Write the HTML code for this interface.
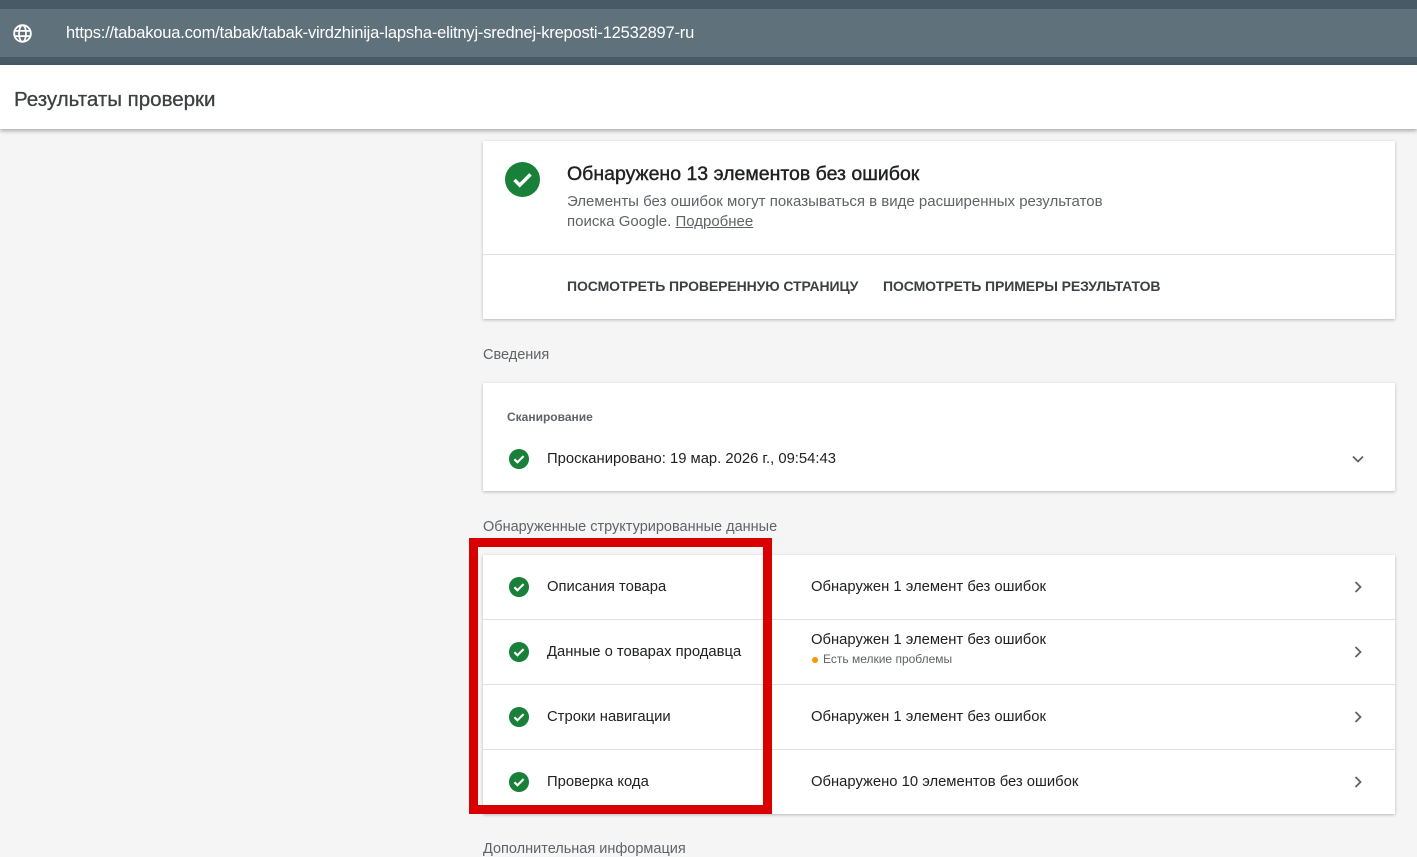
<!DOCTYPE html>
<html><head><meta charset="utf-8"><style>
*{margin:0;padding:0;box-sizing:border-box}
body{width:1417px;height:856px;overflow:hidden;background:#f5f5f5;font-family:"Liberation Sans",Roboto,sans-serif;position:relative;color:#202124}
.top{position:absolute;left:0;top:0;width:1417px;height:65px;background:#5f717b;border-top:9px solid #475a65;border-bottom:8px solid #475a65}
.url{position:absolute;left:66px;color:#fff;font-size:16.5px;letter-spacing:-0.2px}
.hdr{position:absolute;left:0;top:65px;width:1417px;height:64px;background:#fff;box-shadow:0 2px 4px rgba(0,0,0,.3)}
.hdr span{position:absolute;left:14px;top:23px;font-size:20.5px;color:#3c4043;font-weight:500;-webkit-text-stroke:0.3px #3c4043}
.card{position:absolute;left:483px;width:912px;background:#fff;box-shadow:0 1px 3px rgba(0,0,0,.25)}
.lbl{position:absolute;left:483px;font-size:14.5px;color:#5f6368}
.chk{position:absolute;width:20px;height:20px}
.t{position:absolute;font-size:14.8px;white-space:nowrap}
.row{position:absolute;left:0;width:912px;height:65px;border-top:1px solid #e0e0e0}
.chev{position:absolute;right:30px;width:14px;height:14px}
</style></head><body>
<div class="top">
<svg style="position:absolute;left:12px;top:14px" width="21" height="21" viewBox="0 0 24 24"><circle cx="12" cy="12" r="9.5" fill="none" stroke="#fff" stroke-width="2.2"/><ellipse cx="12" cy="12" rx="4" ry="9.5" fill="none" stroke="#fff" stroke-width="2"/><path d="M3 9h18M3 15h18" stroke="#fff" stroke-width="2"/></svg>
<div class="url" style="top:15px">https://tabakoua.com/tabak/tabak-virdzhinija-lapsha-elitnyj-srednej-kreposti-12532897-ru</div>
</div>
<div class="hdr"><span>Результаты проверки</span></div>

<div class="card" style="top:141px;height:178px">
<svg class="chk" style="left:22px;top:21px;width:35px;height:35px" viewBox="0 0 24 24"><circle cx="12" cy="12" r="12" fill="#188038"/><path d="M6.5 12.3l3.6 3.6 7.4-7.4" fill="none" stroke="#fff" stroke-width="2.4"/></svg>
<div class="t" style="left:84px;top:22px;font-size:19.5px;-webkit-text-stroke:0.4px #202124">Обнаружено 13 элементов без ошибок</div>
<div class="t" style="left:84px;top:51px;color:#5f6368;font-size:15px;line-height:20px">Элементы без ошибок могут показываться в виде расширенных результатов<br>поиска Google. <u>Подробнее</u></div>
<div style="position:absolute;left:0;top:113px;width:912px;border-top:1px solid #e0e0e0"></div>
<div class="t" style="left:84px;top:137px;font-size:14px;font-weight:bold;color:#3c4043;letter-spacing:-0.1px">ПОСМОТРЕТЬ ПРОВЕРЕННУЮ СТРАНИЦУ</div>
<div class="t" style="left:400px;top:137px;font-size:14px;font-weight:bold;color:#3c4043;letter-spacing:-0.1px">ПОСМОТРЕТЬ ПРИМЕРЫ РЕЗУЛЬТАТОВ</div>
</div>

<div class="lbl" style="top:347px">Сведения</div>
<div class="card" style="top:383px;height:108px">
<div class="t" style="left:24px;top:27px;font-size:12px;font-weight:bold;color:#5f6368">Сканирование</div>
<svg class="chk" style="left:26px;top:66px" viewBox="0 0 24 24"><circle cx="12" cy="12" r="12" fill="#188038"/><path d="M6.5 12.3l3.6 3.6 7.4-7.4" fill="none" stroke="#fff" stroke-width="2.6"/></svg>
<div class="t" style="left:64px;top:68px">Просканировано: 19 мар. 2026 г., 09:54:43</div>
<svg class="chev" style="top:69px" viewBox="0 0 14 14"><path d="M2 4.5l5 5 5-5" fill="none" stroke="#5f6368" stroke-width="1.8"/></svg>
</div>

<div class="lbl" style="top:519px">Обнаруженные структурированные данные</div>
<div class="card" style="top:555px;height:259px">
<div class="row" style="top:0;border-top:none">
<svg class="chk" style="left:26px;top:22px" viewBox="0 0 24 24"><circle cx="12" cy="12" r="12" fill="#188038"/><path d="M6.5 12.3l3.6 3.6 7.4-7.4" fill="none" stroke="#fff" stroke-width="2.6"/></svg>
<div class="t" style="left:64px;top:24px">Описания товара</div>
<div class="t" style="left:328px;top:24px">Обнаружен 1 элемент без ошибок</div>
<svg class="chev" style="top:25px" viewBox="0 0 14 14"><path d="M4.5 2l5 5-5 5" fill="none" stroke="#5f6368" stroke-width="1.8"/></svg>
</div>
<div class="row" style="top:64px">
<svg class="chk" style="left:26px;top:22px" viewBox="0 0 24 24"><circle cx="12" cy="12" r="12" fill="#188038"/><path d="M6.5 12.3l3.6 3.6 7.4-7.4" fill="none" stroke="#fff" stroke-width="2.6"/></svg>
<div class="t" style="left:64px;top:24px">Данные о товарах продавца</div>
<div class="t" style="left:328px;top:12px">Обнаружен 1 элемент без ошибок</div>
<div style="position:absolute;left:329px;top:37px;width:6px;height:6px;border-radius:50%;background:#f29900"></div>
<div class="t" style="left:340px;top:32px;font-size:12px;color:#5f6368">Есть мелкие проблемы</div>
<svg class="chev" style="top:25px" viewBox="0 0 14 14"><path d="M4.5 2l5 5-5 5" fill="none" stroke="#5f6368" stroke-width="1.8"/></svg>
</div>
<div class="row" style="top:129px">
<svg class="chk" style="left:26px;top:22px" viewBox="0 0 24 24"><circle cx="12" cy="12" r="12" fill="#188038"/><path d="M6.5 12.3l3.6 3.6 7.4-7.4" fill="none" stroke="#fff" stroke-width="2.6"/></svg>
<div class="t" style="left:64px;top:24px">Строки навигации</div>
<div class="t" style="left:328px;top:24px">Обнаружен 1 элемент без ошибок</div>
<svg class="chev" style="top:25px" viewBox="0 0 14 14"><path d="M4.5 2l5 5-5 5" fill="none" stroke="#5f6368" stroke-width="1.8"/></svg>
</div>
<div class="row" style="top:194px">
<svg class="chk" style="left:26px;top:22px" viewBox="0 0 24 24"><circle cx="12" cy="12" r="12" fill="#188038"/><path d="M6.5 12.3l3.6 3.6 7.4-7.4" fill="none" stroke="#fff" stroke-width="2.6"/></svg>
<div class="t" style="left:64px;top:24px">Проверка кода</div>
<div class="t" style="left:328px;top:24px">Обнаружено 10 элементов без ошибок</div>
<svg class="chev" style="top:25px" viewBox="0 0 14 14"><path d="M4.5 2l5 5-5 5" fill="none" stroke="#5f6368" stroke-width="1.8"/></svg>
</div>
</div>
<div style="position:absolute;left:469px;top:538px;width:303px;height:276px;border:9px solid #d90000"></div>
<div class="lbl" style="top:841px">Дополнительная информация</div>
</body></html>
